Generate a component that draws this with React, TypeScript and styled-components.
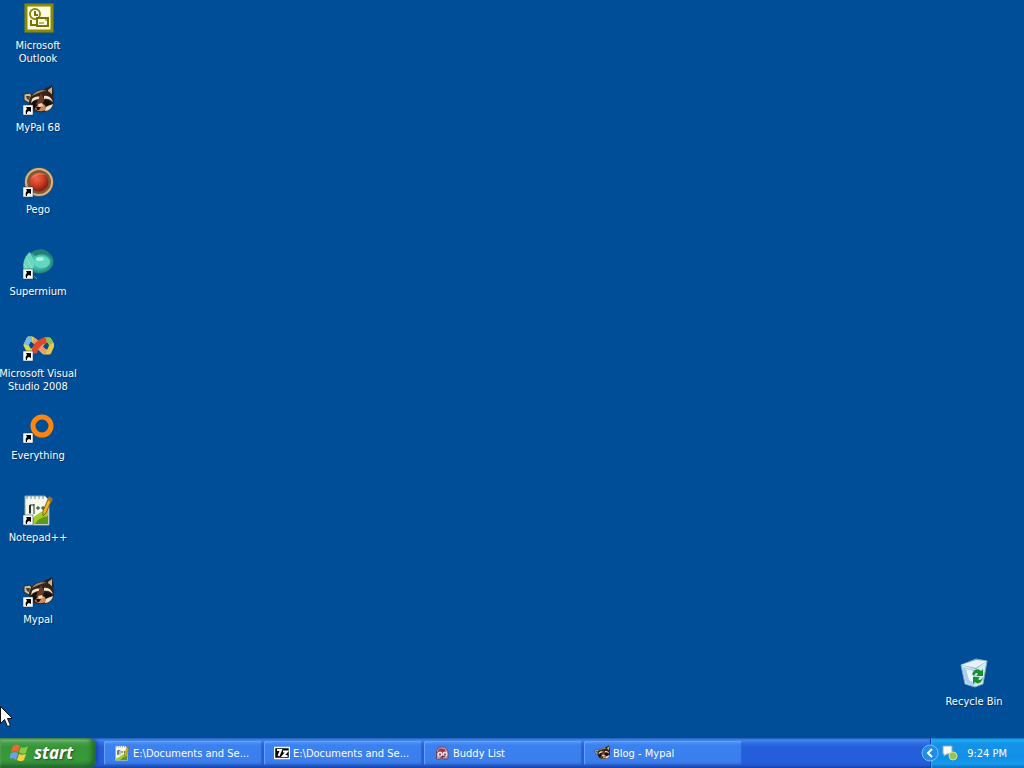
import React from "react";
import styled, { createGlobalStyle } from "styled-components";

const GlobalStyle = createGlobalStyle`
  * { box-sizing: border-box; }
  body {
    margin: 0;
    background: #004e98;
    font-family: Tahoma, "DejaVu Sans Condensed", "DejaVu Sans", sans-serif;
    font-size: 11px;
    color: #fff;
  }
  button { font: inherit; color: inherit; border: 0; padding: 0; background: none; }
`;

const Screen = styled.div`
  min-height: 100vh;
  display: flex;
  flex-direction: column;
`;

const Desktop = styled.main`
  flex: 1;
  position: relative;
  display: flex;
  justify-content: space-between;
  padding: 2px 12px 0 0;
`;

const IconColumn = styled.div<{ $bottom?: boolean }>`
  display: flex;
  flex-direction: column;
  gap: 2px;
  justify-content: ${(p) => (p.$bottom ? "flex-end" : "flex-start")};
`;

const Shortcut = styled.button`
  width: 76px;
  height: 80px;
  display: flex;
  flex-direction: column;
  align-items: center;
  gap: 5px;
`;

const ShortcutLabel = styled.span`
  line-height: 13px;
  text-align: center;
  white-space: pre;
  text-shadow: 1px 1px 1px #00336b;
`;

const Picture = styled.svg<{ $size: number }>`
  width: ${(p) => p.$size}px;
  height: ${(p) => p.$size}px;
  flex: none;
  display: block;
`;

const Pointer = styled.svg`
  position: absolute;
  left: 0;
  bottom: 10px;
  width: 12px;
  height: 22px;
`;

const Taskbar = styled.footer`
  height: 30px;
  display: flex;
  background: linear-gradient(#2056b4 0, #4287ee 2px, #2f6fe4 5px, #245edb 9px, #245edb 24px, #2359d3 27px, #1941a5 30px);
`;

const StartButton = styled.button`
  width: 96px;
  display: flex;
  align-items: center;
  gap: 4px;
  padding-left: 10px;
  border-radius: 0 8px 8px 0;
  background: linear-gradient(#2f7740 0, #76b777 2px, #469e48 5px, #379537 9px, #389a38 22px, #35893a 26px, #1f6530 30px);
  box-shadow: inset -4px -2px 5px #20682c, inset 1px 0 2px #54a058, 2px 0 3px #1b49ad;
  font-family: "Noto Sans", "Open Sans", sans-serif;
  font-size: 17px;
  font-weight: 700;
  font-style: italic;
  line-height: 24px;
  text-shadow: 1px 1px 2px #1b4a1e;
`;

const Tasks = styled.nav`
  flex: 1;
  min-width: 0;
  display: flex;
  gap: 2px;
  padding: 3px 0 3px 8px;
`;

const Task = styled.button`
  flex: 0 1 158px;
  min-width: 0;
  display: flex;
  align-items: center;
  gap: 3px;
  padding: 0 8px 0 10px;
  border-radius: 2px;
  background: linear-gradient(#5b9bf8, #3c81f0 4px, #3b7eee 20px, #3572df);
  box-shadow: inset 1px 1px 1px #68a5fa, inset -1px -1px 1px #2d64cd;
`;

const TaskLabel = styled.span`
  overflow: hidden;
  text-overflow: ellipsis;
  white-space: nowrap;
`;

const Tray = styled.section`
  display: flex;
  align-items: center;
  padding-right: 17px;
  margin-left: 8px;
  background: linear-gradient(#0c5fb5 0, #1db0f2 2px, #1591e9 6px, #1290e8 20px, #149bec 26px, #0d68b8 30px);
  border-left: 1px solid #1042af;
  box-shadow: inset 1px 0 1px #1bb9fb;
`;

const TrayToggle = styled.button`
  margin-left: -10px;
  margin-right: 3px;
`;

const Clock = styled.time`
  margin-left: 9px;
  white-space: nowrap;
`;

const Arrow = () => (
  <g>
    <path d="M1 21h10v10H1z" fill="#fff" stroke="#17355b" strokeWidth=".5" />
    <path d="M4 23h5v5l-2-1c-2 1-2 1-2 3H4c-1-3 0-4 1-5z" fill="#000" />
  </g>
);

const RaccoonArt = () => (
  <g>
    <path d="M22 5L30 1l2 9-3 7z" fill="#2a221c" />
    <path d="M26 6l4-3v7l-3 3z" fill="#c9b393" />
    <path d="M2 10l6-1 3 5-4 5-5-3z" fill="#c9bda2" stroke="#2c2823" />
    <path d="M4 12h4l-1 4-2-1z" fill="#4c4031" />
    <path d="M7 18C7 11 14 5 22 6c7 1 11 7 10 13-2 8-9 10-16 9-6-1-9-5-9-10z" fill="#33231b" />
    <path d="M10 12c3-5 10-7 15-5-5 0-9 2-15 5z" fill="#a48768" />
    <path d="M22 12c4-1 7 1 9 6-3-3-6-4-9-3zM10 15c2-2 5-3 8-2l-1 2c-3 0-5 1-8 4z" fill="#f3e3ca" />
    <path d="M10 19c3-3 6-3 9 0l-3 4-5 1zM21 17c4-2 8 0 9 3l-4 3-5-3z" fill="#11100f" />
    <path d="M17 14l2-5 3 6-1 6-4 2-3-3z" fill="#6b3b29" />
    <path d="M23 24c3-3 6-3 8-4-1 4-4 7-8 7z" fill="#f3dfc4" />
    <path d="M13 25c2-5 6-6 10-4l1 4c-2 3-8 3-11 0z" fill="#c9885d" />
    <path d="M16 20l4-1 1 3-4 1z" fill="#ead6bd" />
    <path d="M14 23h5l-2 3h-2z" fill="#19100e" />
  </g>
);

const NotepadArt = () => (
  <g>
    <path d="M3 2h20l4 4v25H3z" fill="#f4f8ed" stroke="#8da8a0" />
    <path d="M4 27C13 25 14 18 26 16v14H4z" fill="#a2cc27" />
    <path d="M13 30c3-5 7-7 13-8v8z" fill="#5f9917" />
    <path d="M5 2v3m4-3v3m4-3v3m4-3v3m4-3v3" stroke="#6e8f9b" />
    <path d="M8 11v9M12 10v10M8 11h4M14 14h4m-2-2v4m3-2h4m-2-2v4" fill="none" stroke="#203322" />
    <path d="M8 11v8" stroke="#203322" strokeWidth="2" />
    <path d="M27 3l3 2-6 14-3 3v-5z" fill="#f3b51c" stroke="#876416" />
    <path d="M27 2l4 3-2 4-3-3z" fill="#a16f28" />
  </g>
);

type Kind = "outlook" | "raccoon" | "pego" | "supermium" | "studio" | "everything" | "notepad" | "bin" | "seven" | "buddy";

const art: Record<Kind, React.ReactNode> = {
  outlook: (
    <g>
      <path d="M4 3h26v26H4z" fill="#fffce4" stroke="#8c8a00" strokeWidth="3" />
      <circle cx="13" cy="12" r="5" fill="#fff" stroke="#8c8a00" strokeWidth="2" />
      <path d="M13 9v4h3M9 18v5h6M15 16h11v8H15z" fill="none" stroke="#777500" strokeWidth="2" />
      <path d="M17 21h5M23 18h2" stroke="#777500" strokeWidth="1" />
    </g>
  ),
  raccoon: <RaccoonArt />,
  pego: (
    <g>
      <circle cx="17" cy="16" r="12" fill="url(#red)" stroke="#7e5a34" strokeWidth="5" />
      <circle cx="17" cy="16" r="13" fill="none" stroke="#d9b485" strokeWidth="2" />
      <path d="M9 13c2-6 10-8 15-4-6-1-10 0-15 4z" fill="#f18c6c" opacity=".6" />
    </g>
  ),
  supermium: (
    <g>
      <path d="M8 6C15-1 27 1 31 10c2 6-2 13-10 15-8 2-16-3-18-8z" fill="url(#teal)" />
      <path d="M8 4C1 9-1 20 4 27c4-1 8-6 9-12z" fill="#68d7bb" />
      <path d="M10 4c9-5 17-3 20 7-4-5-10-6-17-3z" fill="#237e77" />
      <ellipse cx="20" cy="14" rx="8" ry="6" fill="#62d8c2" />
      <ellipse cx="18" cy="11" rx="4" ry="2" fill="#a6f3e0" />
      <path d="M2 16l4 7M5 11l5 9" stroke="#9be0cc" />
      <path d="M12 28l3 3" stroke="#49a69f" />
    </g>
  ),
  studio: (
    <g fill="none" strokeLinejoin="round" strokeWidth="5">
      <path d="M15 13l-5-4H7l-3 5v2l3 5h4l4-4" stroke="#304872" strokeWidth="6" />
      <path d="M15 13l-5-4H7l-3 6 3 6h4l5-5" stroke="#d9db55" />
      <path d="M4 15l3-6h3" stroke="#78b9ef" />
      <path d="M17 17l6-7h4l3 5-3 7h-5l-5-5" stroke="#e9c548" />
      <path d="M23 10h4l2 4" stroke="#8dbf57" />
      <path d="M11 10c5 1 7 10 13 12" stroke="#ec9b6e" strokeWidth="5" />
      <path d="M12 23c1-6 5-11 12-13" stroke="#df482c" strokeWidth="6" />
    </g>
  ),
  everything: <circle cx="20" cy="14" r="9" fill="none" stroke="#ff850c" strokeWidth="5" />,
  notepad: <NotepadArt />,
  bin: (
    <g>
      <path d="M3 7L18 1l11 2-4 23-8 3-10-3z" fill="#d6e9f6" stroke="#7fa6c0" />
      <path d="M3 7L18 1l11 2-11 8z" fill="#7ba3b5" />
      <path d="M3 7l15-5 11 1-11 7z" fill="#e3f3fb" />
      <path d="M4 9l14 3-1 16-9-3z" fill="#a8d0ec" />
      <path d="M8 11l7 2 1 12-5-3z" fill="#e7f7ff" />
      <path d="M14 16c2-5 6-6 9-3l2-2v7h-7l2-2c-2-2-3-1-4 2zM25 19c-1 6-5 8-8 5l-2 2v-7h7l-2 2c2 2 3 1 5-2z" fill="#159329" />
    </g>
  ),
  seven: (
    <g>
      <path d="M1 5h30v22H1z" fill="#050505" stroke="#fff" strokeWidth="3" />
      <path d="M6 10h8L9 22M18 13h8l-8 9h9" fill="none" stroke="#fff" strokeWidth="4" />
    </g>
  ),
  buddy: (
    <g>
      <path d="M5 28V11l5-7h12l6 8v16H17l-2-5-4 6z" fill="#c798ae" stroke="#67496e" strokeWidth="2" />
      <path d="M6 15l5-8 10 1 4 8-4 3-11-1z" fill="#963a4b" />
      <circle cx="12" cy="18" r="5" fill="#f7dddd" />
      <circle cx="22" cy="18" r="5" fill="#f7dddd" />
      <path d="M12 17v4m10-4v4M16 23h5" stroke="#552839" strokeWidth="3" />
    </g>
  ),
};

const Art = ({ kind, size = 32, linked = false }: { kind: Kind; size?: number; linked?: boolean }) => (
  <Picture $size={size} viewBox="0 0 32 32" aria-hidden="true">
    <defs>
      <radialGradient id="red" cx="40%" cy="35%">
        <stop stopColor="#ef6949" /><stop offset=".6" stopColor="#cf3c25" /><stop offset="1" stopColor="#8a2417" />
      </radialGradient>
      <radialGradient id="teal">
        <stop stopColor="#5ce1d1" /><stop offset=".6" stopColor="#3db9a9" /><stop offset="1" stopColor="#247e79" />
      </radialGradient>
    </defs>
    {art[kind]}
    {linked && <Arrow />}
  </Picture>
);

const shortcuts: { kind: Kind; label: string }[] = [
  { kind: "outlook", label: "Microsoft\nOutlook" },
  { kind: "raccoon", label: "MyPal 68" },
  { kind: "pego", label: "Pego" },
  { kind: "supermium", label: "Supermium" },
  { kind: "studio", label: "Microsoft Visual\nStudio 2008" },
  { kind: "everything", label: "Everything" },
  { kind: "notepad", label: "Notepad++" },
  { kind: "raccoon", label: "Mypal" },
];

const tasks: { kind: Kind; label: string }[] = [
  { kind: "notepad", label: "E:\\Documents and Se..." },
  { kind: "seven", label: "E:\\Documents and Se..." },
  { kind: "buddy", label: "Buddy List" },
  { kind: "raccoon", label: "Blog - Mypal" },
];

export default function App() {
  return (
    <Screen>
      <GlobalStyle />
      <Desktop>
        <IconColumn>
          {shortcuts.map(({ kind, label }) => (
            <Shortcut key={label}>
              <Art kind={kind} linked={kind !== "outlook"} />
              <ShortcutLabel>{label}</ShortcutLabel>
            </Shortcut>
          ))}
        </IconColumn>
        <IconColumn $bottom>
          <Shortcut>
            <Art kind="bin" />
            <ShortcutLabel>Recycle Bin</ShortcutLabel>
          </Shortcut>
        </IconColumn>
        <Pointer viewBox="0 0 12 22" aria-hidden="true">
          <path d="M.5.5v17l4-4 3 7 3-1-3-7h5z" fill="#fff" stroke="#111" />
        </Pointer>
      </Desktop>
      <Taskbar>
        <StartButton>
          <Picture $size={20} viewBox="0 0 20 20" aria-hidden="true">
            <path d="M3 3c3-2 5-1 7 0L8 9C6 8 4 8 1 9z" fill="#ed6638" />
            <path d="M11 4c2 1 4 1 7-1l-2 7c-3 1-5 1-7-1z" fill="#8acb45" />
            <path d="M1 10c3-1 5-1 7 0l-2 7c-2-2-4-2-7-1z" fill="#6d9fee" />
            <path d="M9 11c2 1 4 1 7 0l-2 6c-3 2-5 1-7 0z" fill="#f7cf43" />
          </Picture>
          start
        </StartButton>
        <Tasks aria-label="Open windows">
          {tasks.map(({ kind, label }, i) => (
            <Task key={i}>
              <Art kind={kind} size={16} />
              <TaskLabel>{label}</TaskLabel>
            </Task>
          ))}
        </Tasks>
        <Tray aria-label="Notification area">
          <TrayToggle aria-label="Show hidden icons">
            <Picture $size={18} viewBox="0 0 18 18" aria-hidden="true">
              <circle cx="9" cy="9" r="8" fill="#238be9" stroke="#76bdf5" />
              <path d="M11 5L7 9l4 4" fill="none" stroke="#fff" strokeWidth="2" />
            </Picture>
          </TrayToggle>
          <Picture $size={16} viewBox="0 0 16 16" aria-hidden="true">
            <path d="M1 1h9v8H5l-3 2V9H1z" fill="#f7faf5" stroke="#96a9b1" />
            <circle cx="11" cy="11" r="4" fill="#90c75b" stroke="#d9df88" />
          </Picture>
          <Clock dateTime="21:24">9:24 PM</Clock>
        </Tray>
      </Taskbar>
    </Screen>
  );
}
